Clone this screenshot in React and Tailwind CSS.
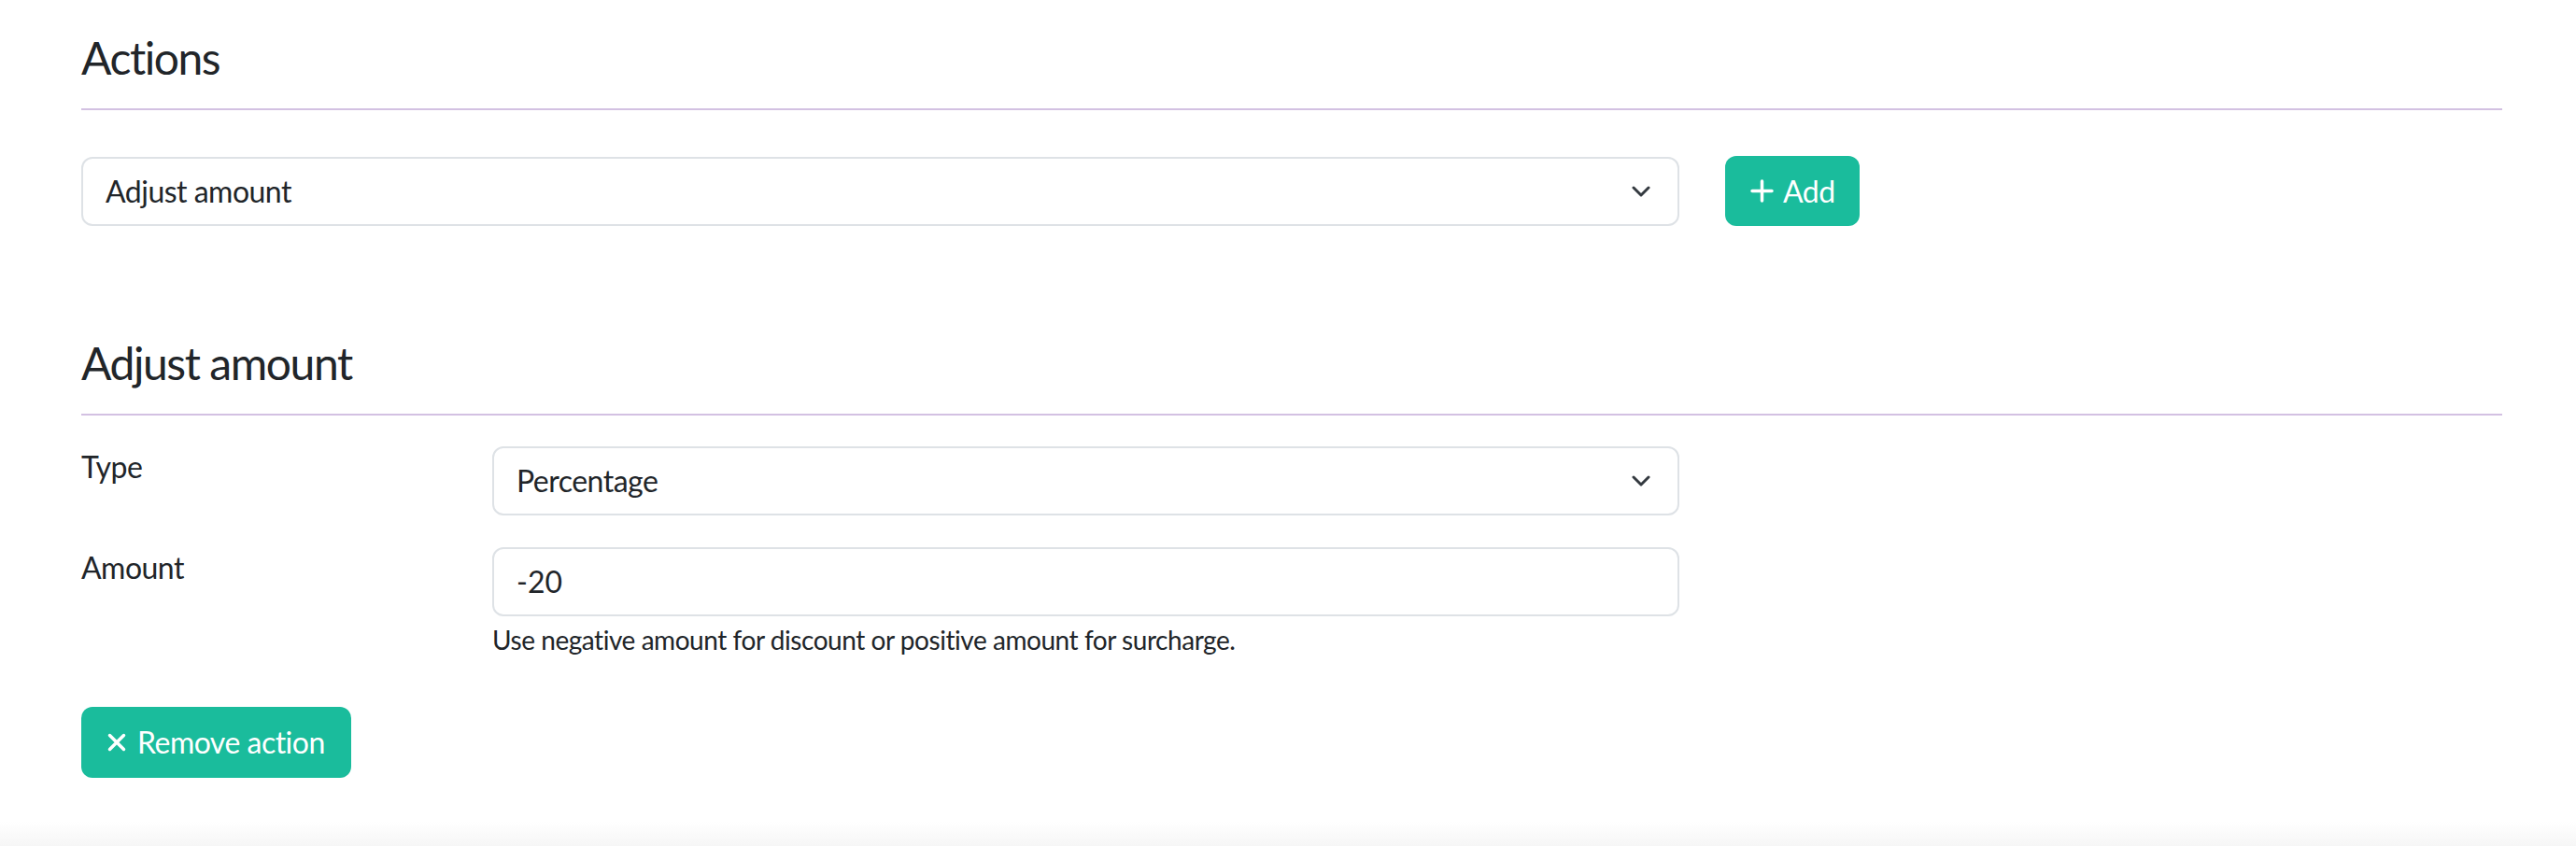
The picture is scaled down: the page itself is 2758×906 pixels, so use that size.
import React from 'react';

const font = { fontFamily: 'Lato, "Open Sans", sans-serif' };

const Chevron = () => (
    <svg width="20" height="12" viewBox="0 0 20 12" fill="none" className="shrink-0">
        <polyline points="2,2 10,10 18,2" stroke="#343a40" strokeWidth="3" strokeLinecap="round" strokeLinejoin="round" />
    </svg>
);

const PlusIcon = () => (
    <svg width="25" height="25" viewBox="0 0 25 25" fill="none" className="shrink-0">
        <path d="M12.5 2v21M2 12.5h21" stroke="white" strokeWidth="3.5" strokeLinecap="round" />
    </svg>
);

const XIcon = () => (
    <svg width="20" height="20" viewBox="0 0 20 20" fill="none" className="shrink-0">
        <path d="M2.5 2.5l15 15M17.5 2.5l-15 15" stroke="white" strokeWidth="3.5" strokeLinecap="round" />
    </svg>
);

const SelectBox = ({ value, className = '' }) => (
    <div className={`h-[74px] flex items-center justify-between border-2 border-[#dee2e6] rounded-[12px] bg-white pl-[24px] pr-[29px] ${className}`}>
        <span className="text-[32px] leading-none text-[#212529] tracking-[-0.016em]">{value}</span>
        <Chevron />
    </div>
);

const SectionTitle = ({ children }) => (
    <div className="pb-[30px] border-b-2 border-[#d3c1e2]">
        <h2 className="text-[48px] leading-none text-[#212529] tracking-[-0.03em]">{children}</h2>
    </div>
);

const Field = ({ label, children }) => (
    <div className="flex">
        <div className="w-[440px] shrink-0 pt-[6px] text-[32px] leading-none text-[#212529] tracking-[-0.016em]">{label}</div>
        <div className="w-[1271px]">{children}</div>
    </div>
);

export default function App() {
    return (
        <div className="min-h-[906px] bg-white flex flex-col" style={font}>
            <div className="pl-[87px] pr-[79px] pt-[38px] flex-1">
                <SectionTitle>Actions</SectionTitle>

                <div className="flex items-center gap-[49px] mt-[49px]">
                    <SelectBox value="Adjust amount" className="w-[1711px]" />
                    <button className="h-[75px] flex items-center gap-[10px] pl-[27px] pr-[26px] rounded-[12px] bg-[#1abc9c] text-white text-[32px] leading-none tracking-[-0.016em]">
                        <PlusIcon />
                        <span>Add</span>
                    </button>
                </div>

                <div className="mt-[123px]">
                    <SectionTitle>Adjust amount</SectionTitle>
                </div>

                <div className="mt-[33px] flex flex-col gap-[34px]">
                    <Field label="Type">
                        <SelectBox value="Percentage" />
                    </Field>
                    <Field label="Amount">
                        <div className="h-[74px] flex items-center border-2 border-[#dee2e6] rounded-[12px] bg-white pl-[24px]">
                            <span className="text-[32px] leading-none text-[#212529]">-20</span>
                        </div>
                        <p className="mt-[11px] text-[28px] leading-none text-[#212529] tracking-[-0.016em]">
                            Use negative amount for discount or positive amount for surcharge.
                        </p>
                    </Field>
                </div>

                <button className="mt-[58px] h-[76px] flex items-center gap-[12px] pl-[28px] pr-[28px] rounded-[12px] bg-[#1abc9c] text-white text-[32px] leading-none tracking-[-0.016em]">
                    <XIcon />
                    <span>Remove action</span>
                </button>
            </div>
            <div className="h-[26px] bg-gradient-to-b from-white to-[#f6f6f6]" />
        </div>
    );
}
